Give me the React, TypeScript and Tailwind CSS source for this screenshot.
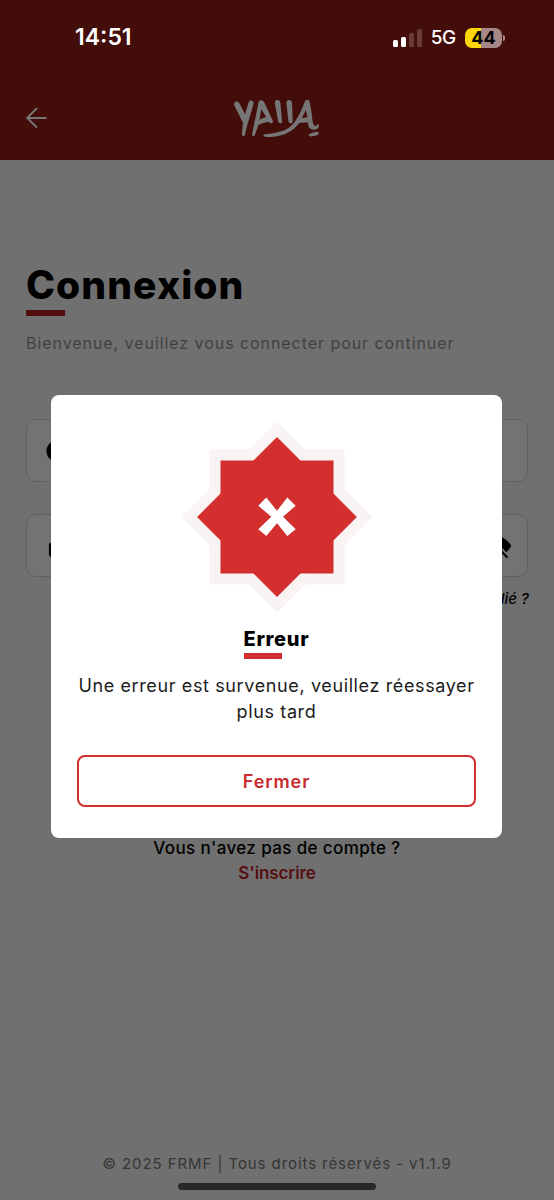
import {IoEyeOff, IoLockClosed, IoPersonCircle} from 'react-icons/io5';

function StatusBar() {
  return (
    <div className="flex h-[75px] items-center justify-between pl-[75px] pr-[49px] text-white">
      <p className="text-[23px] font-semibold leading-none">14:51</p>
      <div className="flex items-center">
        <div className="flex h-[18px] items-end gap-[3px]">
          <span className="h-[7px] w-[5px] rounded-[1.5px] bg-white" />
          <span className="h-[10px] w-[5px] rounded-[1.5px] bg-white" />
          <span className="h-[14px] w-[5px] rounded-[1.5px] bg-[#6a3d3b]" />
          <span className="h-[18px] w-[5px] rounded-[1.5px] bg-[#6a3d3b]" />
        </div>
        <p className="ml-[9px] text-[19px] font-medium leading-none tracking-[-0.3px]">5G</p>
        <div className="ml-[9px] flex h-5 w-[37px] items-center justify-center rounded-[7px] bg-linear-to-r from-[#ffd60a] from-43% to-[#a78786] to-43%">
          <span className="text-[18px] font-bold leading-none text-black">44</span>
        </div>
        <span className="ml-px h-[6px] w-[2px] rounded-r-full bg-[#a78786]" />
      </div>
    </div>
  );
}

function Logo() {
  return (
    <svg
      viewBox="660 290 255 125"
      preserveAspectRatio="none"
      className="h-[41.67px] w-[90px]"
      fill="#777676"
    >
      <path d="M666 314C664 303 677 300 681 309L697 342L707 306C710 297 723 299 721 309C716 336 704 366 697 403C695 409 688 408 688 402L691 367Z" />
      <path d="M735 307C737 297 748 297 752 307L776 362C776 370 770 371 765 365C755 364 742 371 735 373L725 403C723 409 716 408 717 401ZM743 327L738 358C744 355 750 352 757 351Z" />
      <path d="M781 307C781 296 797 296 797 307L802 364C801 370 794 370 791 364Z" />
      <path d="M814 307C814 296 830 296 830 307L832 364C831 370 824 370 820 364Z" />
      <path d="M866 305C869 296 878 296 880 305L886 340C887 356 889 374 895 377C900 378 900 372 904 372C908 373 907 380 902 385C893 391 882 388 877 379L875 366L851 368C833 392 808 407 777 409C766 411 753 411 749 407C747 401 758 401 768 400C796 396 820 390 837 366C850 346 859 325 866 305ZM869 329L858 354L874 351Z" />
      <path d="M879 402C885 397 895 395 903 394C908 396 905 403 900 405C891 408 882 410 877 406Z" />
    </svg>
  );
}

function Header() {
  return (
    <header className="h-[159.5px] bg-[#430d0a]">
      <StatusBar />
      <div className="grid grid-cols-3 items-center px-[25px] pt-[22px]">
        <svg
          viewBox="0 0 22 22"
          className="size-[22px]"
          fill="none"
          stroke="#777676"
          strokeWidth="2"
          strokeLinecap="round"
          strokeLinejoin="round"
        >
          <path d="M11.4 1.8L2.2 10.9L11.4 20M2.2 10.9H20.8" />
        </svg>
        <div className="flex justify-center">
          <Logo />
        </div>
      </div>
    </header>
  );
}

function LoginForm() {
  return (
    <main className="px-[26px] pt-[104px]">
      <h1 className="h-[46px] whitespace-nowrap text-[39px] font-extrabold leading-[42px] tracking-[1.1px] text-black">
        Connexion
      </h1>
      <div className="h-[6.5px] w-[39px] bg-[#4f0e0b]" />
      <p className="mt-[16px] h-[23px] whitespace-nowrap text-[16px] leading-[22px] tracking-[0.94px] text-[#414141]">
        Bienvenue, veuillez vous connecter pour continuer
      </p>

      <div className="mt-[64px] flex h-[63px] items-center rounded-[10px] border-[1.5px] border-[#5f5f5f] bg-[#737373] pl-[17px]">
        <IoPersonCircle className="size-[26px] text-black" />
      </div>
      <div className="mt-8 flex h-[63px] items-center justify-between rounded-[10px] border-[1.5px] border-[#5f5f5f] bg-[#737373] pl-[17.5px] pr-[15px]">
        <IoLockClosed className="size-[25px] text-black" />
        <IoEyeOff className="size-8 text-black" />
      </div>
      <p className="-mr-px mt-[11px] text-right text-[15px] font-medium italic leading-[22px] text-black">
        Mot de passe oublié ?
      </p>
    </main>
  );
}

function Star() {
  return (
    <svg viewBox="-96 -96 192 192" className="size-[192px]">
      <g fill="#f9f3f3">
        <rect x="-67.5" y="-67.5" width="135" height="135" />
        <rect x="-67.5" y="-67.5" width="135" height="135" transform="rotate(45)" />
      </g>
      <g fill="#d32f2f">
        <rect x="-56.5" y="-56.5" width="113" height="113" />
        <rect x="-56.5" y="-56.5" width="113" height="113" transform="rotate(45)" />
      </g>
      <path
        fill="#fff"
        d="M-10.7 -19.5L0 -6.3L10.3 -19.5L18.7 -11.3L6 -0.3L18.7 12.3L10.3 19L0 6.3L-10.7 19L-18.7 12.3L-5.7 -0.3L-18.7 -11.3Z"
      />
    </svg>
  );
}

function ErrorDialog() {
  return (
    <div className="absolute inset-0 flex justify-center pt-[394.5px] pr-px">
      <div
        role="dialog"
        className="flex h-[443px] w-[451px] flex-col items-center rounded-[8px] bg-white px-[26px] pt-[26.5px]"
      >
        <Star />
        <div className="mt-[14px] w-[66px]">
          <h2 className="h-[26px] whitespace-nowrap text-[20px] font-extrabold leading-[24px] tracking-[0.7px] text-black">
            Erreur
          </h2>
          <div className="h-[6px] w-[38.5px] bg-[#d32f2f]" />
        </div>
        <p className="mt-[14px] whitespace-nowrap text-center text-[18px] leading-[26px] tracking-[0.62px] text-[#1c1c1c]">
          Une erreur est survenue, veuillez réessayer
          <br />
          plus tard
        </p>
        <button className="mt-[30px] flex h-[52px] w-full items-center justify-center rounded-[8px] border-2 border-[#d32f2f] text-[18px] font-semibold tracking-[0.9px] text-[#c92a2c]">
          Fermer
        </button>
      </div>
    </div>
  );
}

export default function App() {
  return (
    <div className="relative flex h-[1200px] w-full flex-col overflow-hidden bg-[#707070] font-['Inter',sans-serif]">
      <Header />
      <LoginForm />

      <div className="mt-[226px] flex flex-col items-center text-[17px] leading-[25px]">
        <p className="whitespace-nowrap font-medium tracking-[0.38px] text-black">
          Vous n'avez pas de compte ?
        </p>
        <p className="font-semibold tracking-[-0.1px] text-[#560f10]">S'inscrire</p>
      </div>

      <footer className="mt-auto flex flex-col items-center pb-[10px]">
        <p className="whitespace-nowrap text-[15px] leading-5 tracking-[0.92px] text-[#353535]">
          © 2025 FRMF | Tous droits réservés - v1.1.9
        </p>
        <div className="mt-[9px] h-[7px] w-[198px] rounded-full bg-[#282828]" />
      </footer>

      <ErrorDialog />
    </div>
  );
}
